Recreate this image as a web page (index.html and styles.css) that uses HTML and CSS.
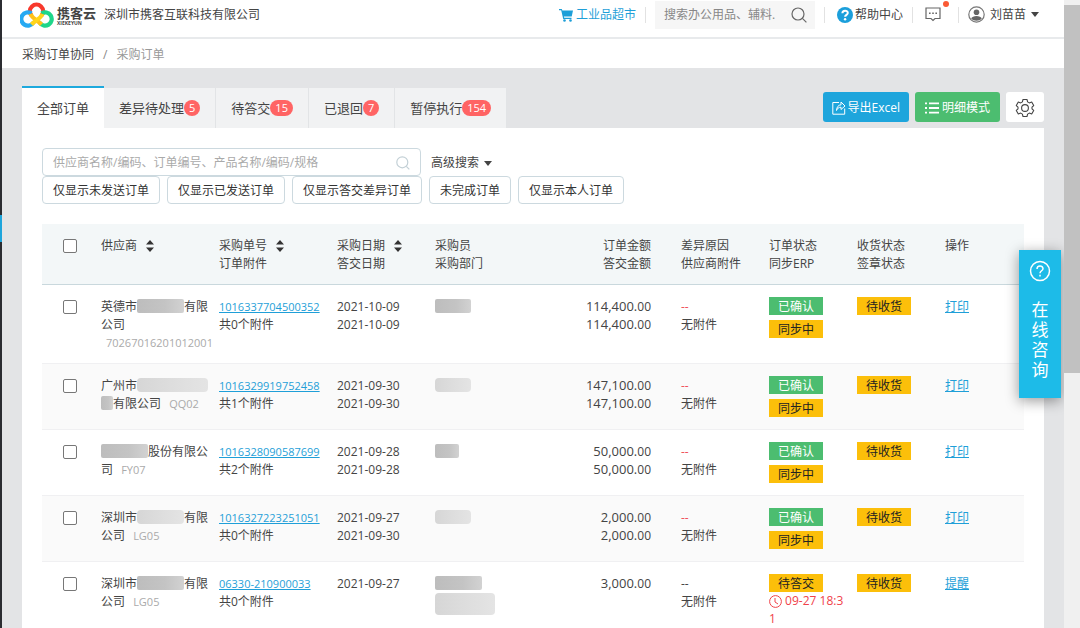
FILE: index.html
```html
<!DOCTYPE html>
<html lang="zh-CN">
<head>
<meta charset="utf-8">
<meta name="viewport" content="width=device-width, initial-scale=1">
<title>采购订单 - 携客云</title>
<link rel="stylesheet" href="styles.css">
</head>
<body>
<div class="shell">
  <div class="side-rail"><span class="side-rail-mark"></span></div>

  <div class="page">
    <header class="topbar">
      <a class="logo" href="#">
        <svg class="logo-mark" width="34" height="28" viewBox="0 0 34 28" fill="none" stroke-width="4.2">
          <path d="M11.5 14.5 A6.6 6.6 0 1 1 21.500 14.500" stroke="#f8382c"/>
          <path d="M11.500 12.500 A6.6 6.600 0 1 0 13.500 21.500" stroke="#27a9f2"/>
          <path d="M21.500 12.500 A6.600 6.600 0 1 1 19.500 21.500" stroke="#1fd68a"/>
          <path d="M10.500 13 C12.500 18 17 18.500 21.500 23.500" stroke="#ffc11a"/>
          <path d="M22.500 13 C20.500 18 16 18.500 11.500 23.500" stroke="#ffd51a"/>
        </svg>
        <span class="logo-words"><span class="logo-name">携客云</span><span class="logo-latin">XIEKEYUN</span></span>
      </a>
      <span class="company">深圳市携客互联科技有限公司</span>
      <nav class="topnav">
        <a class="mall" href="#">
          <svg width="15" height="14" viewBox="0 0 15 14"><path d="M0 1h2.800l.6 1.500H14l-1.300 6H4.900l.3 1.200h7.300v1.200H4.200L2.200 2.200H0z" fill="#1d9fd8"/><circle cx="5.500" cy="12.500" r="1.300" fill="#1d9fd8"/><circle cx="11.500" cy="12.500" r="1.300" fill="#1d9fd8"/></svg>
          工业品超市</a>
        <span class="divider"></span>
        <form class="mall-search">
          <input type="text" aria-label="搜索商品" placeholder="搜索办公用品、辅料.">
          <button type="button" aria-label="搜索"><svg width="16" height="16" viewBox="0 0 16 16" fill="none" stroke="#666" stroke-width="1.200"><circle cx="7" cy="7" r="6"/><path d="M11.400 11.400l4 4"/></svg></button>
        </form>
        <span class="divider"></span>
        <a class="help" href="#">
          <svg width="16" height="16" viewBox="0 0 16 16"><circle cx="8" cy="8" r="8" fill="#1b9fdb"/><path d="M5.400 6.200C5.400 2.900 10.800 2.900 10.800 6C10.800 7.800 8.100 7.900 8.100 9.800" fill="none" stroke="#fff" stroke-width="2"/><circle cx="8.100" cy="12.200" r="1.200" fill="#fff"/></svg>
          帮助中心</a>
        <span class="divider"></span>
        <button type="button" class="message" aria-label="消息">
          <svg width="16" height="15" viewBox="0 0 16 15" fill="none" stroke="#666" stroke-width="1.200"><path d="M1 1h14v10.500H10L8 13.500 6 11.500H1z"/><path d="M4 6.200h1.600M7.200 6.200h1.600M10.400 6.200H12" stroke-width="1.600"/></svg>
          <span class="message-dot"></span>
        </button>
        <span class="divider"></span>
        <button type="button" class="user">
          <svg width="17" height="17" viewBox="0 0 17 17"><circle cx="8.500" cy="8.500" r="7.700" fill="#fff" stroke="#777" stroke-width="1.200"/><circle cx="8.500" cy="6.200" r="2.800" fill="#666"/><path d="M3.200 12.500c1-3.400 9.600-3.400 10.600 0-2.300 3-8.300 3-10.600 0z" fill="#666"/></svg>
          <span>刘苗苗</span><span class="caret"></span>
        </button>
      </nav>
    </header>

    <nav class="breadcrumb" aria-label="路径"><a href="#">采购订单协同</a><span class="slash">/</span><span class="current">采购订单</span></nav>

    <main class="content">
      <div class="tabbar">
        <div class="tabs" role="tablist">
          <button type="button" role="tab" class="tab active" aria-selected="true">全部订单</button>
          <button type="button" role="tab" class="tab">差异待处理<span class="badge">5</span></button>
          <button type="button" role="tab" class="tab">待答交<span class="badge">15</span></button>
          <button type="button" role="tab" class="tab">已退回<span class="badge">7</span></button>
          <button type="button" role="tab" class="tab">暂停执行<span class="badge">154</span></button>
        </div>
        <div class="actions">
          <button type="button" class="btn export"><svg width="14" height="14" viewBox="0 0 14 14" fill="none" stroke="#fff"><path d="M7 1.500H.8v11.700h11.900V7.500"/><path d="M4.500 9.500c.2-3.500 1.800-5.500 4.500-5.700V1l4 4-4 3.500V6.200C6.500 6.200 5.300 7.500 4.500 9.500z"/></svg>导出Excel</button>
          <button type="button" class="btn detail"><svg width="14" height="12" viewBox="0 0 14 12" fill="#fff"><path d="M0 .5h2v1.800H0zM4 .5h10v1.800H4zM0 5.100h2v1.800H0zM4 5.100h10v1.800H4zM0 9.700h2v1.800H0zM4 9.700h10v1.800H4z"/></svg>明细模式</button>
          <button type="button" class="btn gear" aria-label="设置"><svg width="20" height="20" viewBox="0 0 20 20" fill="none" stroke="#444" stroke-width="1.100" stroke-linejoin="round"><path d="M8 1.500h4l.6 2.400 1.700 1 2.400-.8 2 3.500L17 9.200v1.600l1.700 1.600-2 3.500-2.400-.8-1.700 1-.6 2.400H8l-.6-2.400-1.700-1-2.400.8-2-3.500L3 10.800V9.200L1.300 7.600l2-3.500 2.400.8 1.700-1z"/><circle cx="10" cy="10" r="3.400"/></svg></button>
        </div>
      </div>

      <section class="card">
        <div class="searchline">
          <div class="searchbox">
            <input type="text" aria-label="搜索订单" placeholder="供应商名称/编码、订单编号、产品名称/编码/规格">
            <svg width="14" height="14" viewBox="0 0 14 14" fill="none" stroke="#c3d0d6" stroke-width="1.200"><circle cx="6.300" cy="6.300" r="5.500"/><path d="M10.300 10.300l3 3"/></svg>
          </div>
          <button type="button" class="advanced">高级搜索<span class="caret"></span></button>
        </div>
        <div class="filters">
          <button type="button">仅显示未发送订单</button>
          <button type="button">仅显示已发送订单</button>
          <button type="button">仅显示答交差异订单</button>
          <button type="button">未完成订单</button>
          <button type="button">仅显示本人订单</button>
        </div>

        <table class="orders">
          <colgroup>
            <col class="c-check"><col class="c-supplier"><col class="c-order"><col class="c-date"><col class="c-buyer"><col class="c-amount"><col class="c-state"><col class="c-state"><col class="c-state"><col class="c-action">
          </colgroup>
          <thead>
            <tr>
              <th class="check"><input type="checkbox" aria-label="全选"></th>
              <th>供应商<svg class="sort" width="8" height="12" viewBox="0 0 8 12"><path d="M4 0l4 4.500H0zM4 12l4-4.500H0z"/></svg></th>
              <th>采购单号<svg class="sort" width="8" height="12" viewBox="0 0 8 12"><path d="M4 0l4 4.500H0zM4 12l4-4.500H0z"/></svg><br>订单附件</th>
              <th>采购日期<svg class="sort" width="8" height="12" viewBox="0 0 8 12"><path d="M4 0l4 4.500H0zM4 12l4-4.500H0z"/></svg><br>答交日期</th>
              <th>采购员<br>采购部门</th>
              <th class="amount">订单金额<br>答交金额</th>
              <th>差异原因<br>供应商附件</th>
              <th>订单状态<br>同步ERP</th>
              <th>收货状态<br>签章状态</th>
              <th>操作</th>
            </tr>
          </thead>
          <tbody>
            <tr>
              <td class="check"><input type="checkbox" aria-label="选择 1016337704500352"></td>
              <td class="supplier">英德市<span class="mask w47 dark"></span>有限公司 <span class="code">70267016201012001</span></td>
              <td><a class="number" href="#">1016337704500352</a><br>共0个附件</td>
              <td>2021-10-09<br>2021-10-09</td>
              <td><span class="mask w36 dark"></span></td>
              <td class="amount"><b>114,400.</b>00<br><b>114,400.</b>00</td>
              <td><span class="alert">--</span><br>无附件</td>
              <td class="state"><span class="tag green">已确认</span><span class="tag">同步中</span></td>
              <td class="state"><span class="tag">待收货</span></td>
              <td><a href="#">打印</a></td>
            </tr>
            <tr>
              <td class="check"><input type="checkbox" aria-label="选择 1016329919752458"></td>
              <td class="supplier">广州市<span class="mask w71"></span><span class="mask w12 dark"></span>有限公司 <span class="code">QQ02</span></td>
              <td><a class="number" href="#">1016329919752458</a><br>共1个附件</td>
              <td>2021-09-30<br>2021-09-30</td>
              <td><span class="mask w36"></span></td>
              <td class="amount"><b>147,100.</b>00<br><b>147,100.</b>00</td>
              <td><span class="alert">--</span><br>无附件</td>
              <td class="state"><span class="tag green">已确认</span><span class="tag">同步中</span></td>
              <td class="state"><span class="tag">待收货</span></td>
              <td><a href="#">打印</a></td>
            </tr>
            <tr>
              <td class="check"><input type="checkbox" aria-label="选择 1016328090587699"></td>
              <td class="supplier"><span class="mask w47 dark"></span>股份有限公司 <span class="code">FY07</span></td>
              <td><a class="number" href="#">1016328090587699</a><br>共2个附件</td>
              <td>2021-09-28<br>2021-09-28</td>
              <td><span class="mask w24 dark"></span></td>
              <td class="amount"><b>50,000.</b>00<br><b>50,000.</b>00</td>
              <td><span class="alert">--</span><br>无附件</td>
              <td class="state"><span class="tag green">已确认</span><span class="tag">同步中</span></td>
              <td class="state"><span class="tag">待收货</span></td>
              <td><a href="#">打印</a></td>
            </tr>
            <tr>
              <td class="check"><input type="checkbox" aria-label="选择 1016327223251051"></td>
              <td class="supplier">深圳市<span class="mask w47"></span>有限公司 <span class="code">LG05</span></td>
              <td><a class="number" href="#">1016327223251051</a><br>共0个附件</td>
              <td>2021-09-27<br>2021-09-30</td>
              <td><span class="mask w36"></span></td>
              <td class="amount"><b>2,000.</b>00<br><b>2,000.</b>00</td>
              <td><span class="alert">--</span><br>无附件</td>
              <td class="state"><span class="tag green">已确认</span><span class="tag">同步中</span></td>
              <td class="state"><span class="tag">待收货</span></td>
              <td><a href="#">打印</a></td>
            </tr>
            <tr>
              <td class="check"><input type="checkbox" aria-label="选择 06330-210900033"></td>
              <td class="supplier">深圳市<span class="mask w47 dark"></span>有限公司 <span class="code">LG05</span></td>
              <td><a class="number" href="#">06330-210900033</a><br>共0个附件</td>
              <td>2021-09-27</td>
              <td><span class="mask w47 dark"></span><br><span class="mask w60 tall"></span></td>
              <td class="amount"><b>3,000.</b>00</td>
              <td>--<br>无附件</td>
              <td class="state"><span class="tag">待答交</span><span class="deadline"><svg width="13" height="13" viewBox="0 0 13 13" fill="none" stroke="#f0424a"><circle cx="6.500" cy="6.500" r="5.900"/><path d="M6 3v4l3 2"/></svg> 09-27 18:31</span></td>
              <td class="state"><span class="tag">待收货</span></td>
              <td><a href="#">提醒</a></td>
            </tr>
          </tbody>
        </table>
      </section>
    </main>

    <button type="button" class="consult">
      <svg width="22" height="22" viewBox="0 0 22 22" fill="none" stroke="#fff" stroke-width="1.500"><circle cx="11" cy="11" r="9.500"/><path d="M8 9C8 5 14 5 14 8.700C14 10.800 11 10.800 11 13.300"/><path d="M11 14.800v1.800"/></svg>
      <span>在线咨询</span>
    </button>
  </div>

  <div class="scroll-track"><div class="scroll-thumb"></div></div>
</div>
</body>
</html>
```

FILE: styles.css
```css
* { box-sizing: border-box; }

body {
  margin: 0;
  height: 100vh;
  overflow: hidden;
  color: #444;
  background: #fff;
  font: 12px/18px "Open Sans", "Noto Sans CJK SC", sans-serif;
}

button, input {
  margin: 0;
  padding: 0;
  border: 0;
  background: none;
  color: inherit;
  font: inherit;
}

a { color: #1f9fd8; }
svg { flex: none; }

.shell { display: flex; height: 100vh; }
.side-rail { flex: none; width: 2px; padding-top: 215px; background: #2b2c31; }
.side-rail-mark { display: block; height: 27px; background: #1ea5dc; }
.page { position: relative; flex: 1; min-width: 0; overflow: hidden; background: #e3e4e6; }
.scroll-track { flex: none; width: 16px; padding-top: 5px; background: #f0f0f0; }
.scroll-thumb { height: 368px; background: #c1c1c1; }

/* top bar */
.topbar {
  display: flex;
  align-items: center;
  height: 39px;
  padding: 0 25px 8px 18px;
  border-bottom: 2px solid #e8eaec;
  background: #fff;
}
.logo { display: flex; align-items: center; gap: 3px; color: #444; text-decoration: none; }
.logo-words { display: flex; flex-direction: column; padding-top: 3px; }
.logo-name { font-size: 13px; font-weight: 700; line-height: 14px; }
.logo-latin { font-size: 5px; font-weight: 700; line-height: 6px; }
.company { margin-left: 8px; }
.topnav { display: flex; align-items: center; margin-left: auto; }
.topnav a { display: flex; align-items: center; gap: 2px; text-decoration: none; }
.divider { width: 1px; height: 16px; margin: 0 9px; background: #e2e2e2; }
.mall-search { display: flex; align-items: center; height: 28px; width: 160px; padding: 0 8px 0 9px; background: #f6f6f6; }
.mall-search input { flex: 1; min-width: 0; outline: 0; }
.mall-search input::placeholder { color: #888; opacity: 1; }
.mall-search button, .message { display: flex; }
.topnav .help { margin-left: 3px; color: #444; }
.message { position: relative; margin: 0 8px 0 3px; }
.message-dot { position: absolute; top: -6px; right: -8px; width: 6px; height: 6px; border-radius: 50%; background: #fa5a35; }
.user { display: flex; align-items: center; gap: 5px; }
.caret { border: 4px solid transparent; border-top: 5px solid #444; border-bottom: 0; }

.breadcrumb { display: flex; align-items: center; height: 29px; padding: 2px 0 0 20px; background: #fff; }
.breadcrumb a { color: #444; text-decoration: none; }
.slash { margin: 0 9px; color: #888; }
.current { color: #999; }

/* tabs and actions */
.content { padding: 18px 20px 0; }
.tabbar { display: flex; align-items: flex-end; justify-content: space-between; }
.tabs { display: flex; align-items: flex-end; }
.tab {
  display: flex;
  align-items: center;
  height: 40px;
  padding: 0 15px;
  border-right: 1px solid #e2e4e6;
  background: #f1f2f3;
  font-size: 13px;
}
.tab.active { height: 42px; border-top: 2px solid #1ea9dd; border-right: 0; background: #fff; }
.badge { height: 16px; padding: 0 5px; border-radius: 8px; background: #ff6464; color: #fff; font-size: 11px; line-height: 16px; text-align: center; }
.actions { display: flex; gap: 6px; padding-bottom: 6px; }
.btn { display: flex; align-items: center; justify-content: center; gap: 2px; height: 30px; padding: 1px 9px 0; border-radius: 3px; color: #fff; }
.export { background: #1ea5dc; }
.detail { gap: 3px; padding: 1px 10px 0; background: #4cbd70; }
.gear { background: #fff; }

/* search and filters */
.card { padding: 20px 20px 40px; background: #fff; }
.searchline { display: flex; align-items: center; gap: 10px; }
.searchbox { display: flex; align-items: center; width: 379px; height: 28px; padding: 1px 10px 0; border: 1px solid #ccd9df; border-radius: 4px; }
.searchbox input { flex: 1; min-width: 0; outline: 0; }
.searchbox input::placeholder { color: #aaa; opacity: 1; }
.advanced { display: flex; align-items: center; gap: 5px; padding-top: 2px; }
.filters { display: flex; gap: 7px; margin-bottom: 20px; }
.filters button { height: 28px; padding: 2px 10px 0; border: 1px solid #ccd9df; border-radius: 4px; background: #fff; color: #333; }

/* orders table */
.orders { width: 100%; border-collapse: separate; border-spacing: 0; table-layout: fixed; }
.c-check { width: 49px; }
.c-supplier, .c-order, .c-amount { width: 118px; }
.c-date { width: 98px; }
.c-buyer { width: 128px; }
.c-state { width: 88px; }
.c-action { width: 89px; }
.orders th, .orders td { padding: 13px 0 11px 10px; text-align: left; vertical-align: top; }
.orders th { height: 61px; border-bottom: 1px solid #c9d8dd; background: #f3f7f8; font-weight: 400; }
.orders tbody tr + tr td { border-top: 1px solid #f0f0f2; }
.orders tbody tr:nth-child(even) td { background: #fafafa; }
.orders .check { padding-left: 21px; }
.orders .amount { padding-right: 20px; text-align: right; }
.orders .state { padding-top: 12px; padding-bottom: 12px; }
.check input { display: block; width: 14px; height: 14px; margin-top: 2px; border: 1px solid #777; border-radius: 2px; appearance: none; background: #fff; }
.sort { margin-left: 9px; vertical-align: -2px; fill: #333; }
.number { font-size: 11px; line-height: 12px; }
.code { margin-left: 5px; color: #aaa; font-size: 11px; line-height: 12px; }
.amount b { font-size: 13px; font-weight: 400; line-height: 12px; }
.alert { color: #f0505a; }
.deadline { display: block; color: #f0424a; word-break: break-all; }
.deadline svg { vertical-align: -3px; }
.tag { display: block; width: 54px; height: 18px; margin-bottom: 5px; background: #fcbf0a; color: #222; line-height: 20px; text-align: center; }
.tag:last-child { margin-bottom: 0; }
.tag.green { background: #4cbd70; color: #fff; }
.tag:has(+ .deadline) { margin-bottom: 0; }

/* hidden names */
.mask { display: inline-block; height: 14px; border-radius: 4px; background: linear-gradient(90deg, #d6d6d6, #dcdcdc 40%, #e4e4e4); vertical-align: -2px; }
.mask.dark { border-radius: 2px; background: linear-gradient(90deg, #bdbdbd, #c4c4c4 60%, #d2d2d2); }
.mask.tall { height: 22px; vertical-align: top; }
.w12 { width: 12px; }
.w24 { width: 24px; }
.w36 { width: 36px; }
.w47 { width: 47px; }
.w60 { width: 60px; }
.w71 { width: 71px; }

/* floating help */
.consult {
  position: absolute;
  top: 250px;
  right: 3px;
  display: flex;
  flex-direction: column;
  align-items: center;
  gap: 18px;
  width: 42px;
  height: 148px;
  padding: 10px 12px;
  background: #1dbbe8;
  box-shadow: 0 3px 14px rgba(0, 0, 0, 0.4);
  color: #fff;
  font-size: 17px;
  line-height: 20px;
}
```
